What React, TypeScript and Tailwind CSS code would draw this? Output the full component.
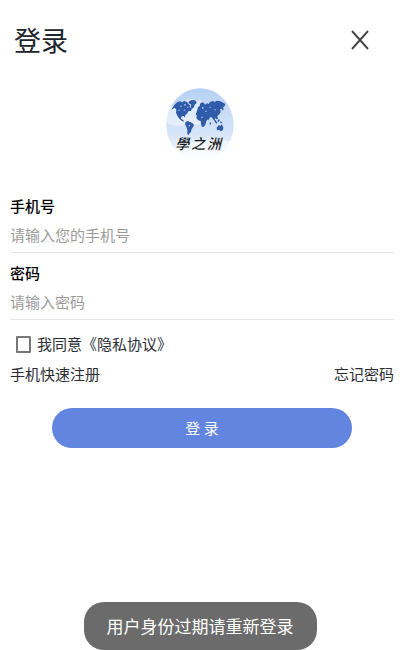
import { useState } from 'react'
import type { FormEvent } from 'react'

function Logo() {
  return (
    <svg className="h-[74px] w-[68px]" viewBox="33 26 204 222" role="img" aria-label="學之洲">
      <defs>
        <linearGradient id="sky" x1="0" y1="0" x2="0" y2="1">
          <stop offset="0" stopColor="#b4d1f3" />
          <stop offset="0.3" stopColor="#c6dbf6" />
          <stop offset="0.6" stopColor="#d5e4f9" />
          <stop offset="0.85" stopColor="#edf3fc" />
          <stop offset="1" stopColor="#ffffff" />
        </linearGradient>
        <clipPath id="disc">
          <ellipse cx="135" cy="137" rx="101" ry="110" />
        </clipPath>
      </defs>
      <g clipPath="url(#disc)">
        <rect x="33" y="26" width="204" height="222" fill="url(#sky)" />
        <path
          d="M33 92q12-14 26-10 8-14 26-12 18-18 40-6 22-4 28 12 14 2 18 16 10 20-10 32-20 14-50 12-46 10-78-6z"
          fill="#fff"
          opacity="0.45"
        />
        <path d="M60 200q30-22 60-10 40-16 70 0 24-10 47-4v62H50z" fill="#fff" opacity="0.5" />
        <g fill="#2f5ba9">
          <path d="M60 75l7-7 9-2 5 3 7-4 8 3 3 5 6 4-1 6 7 4-3 8-8 1-4 7-5 4-1 7-5-4-6 2-1 6 6 3 4 6-7-2-8-7-6-9-4-9 1-9-5-6-6 4-4 4 4-9z" />
          <path d="M101 67l7-4 9-1 6 3 2 6-6 5-2 8-6 4-4-6 1-7-8-3z" />
          <path d="M92 128l7-3 6 3 7 3 5 6-3 7-4 5-2 8-5 6-2 4-4-3v-13l-3-9-4-7z" />
          <path d="M127 91l2-8 5-3 1-7 6-4 6 1 3 6 6-4 5 2 4-6 9-3 5 3 6-4 9 1 8 4 9 5-2 7-5 2 2 6-3 5-3-6-5 2 2 8-4 7-6 5 2 8-5 2-3-4-3 9-5-7-4-5-5 2-2 9-5-9-5-3-6-4-6 2-6-5-6 3-6-2z" />
          <path d="M126 103l7-4 8 3 9 1 5 8 7 1-3 8-5 6-2 8-5 8-6 1-3-9-1-9-7-2-6-7z" />
          <path d="M164 130l3-3 1 7-3 4zM178 120l4 3 5 7-3 3-5-6zM188 121l5-1 1 6-5 2zM195 126l5 2 3 4-6-1z" />
          <path d="M185 145l6-7 6 1 3-4 5 9-1 8-6 4-5-4-7 1z" />
        </g>
        <g fill="#a9c5ec">
          <path d="M76 79h4v4h-4zM88 74h4v5h-4zM86 91h5v3h-5zM71 91h3v4h-3zM97 82h3v4h-3z" />
          <path d="M141 83h4v5h-4zM150 94h5v3h-5zM164 82h3v4h-3zM178 90h4v3h-4zM139 112h4v4h-4zM101 137h4v4h-4z" />
        </g>
      </g>
      <text
        x="61 109 156"
        y="209"
        fill="#171a20"
        className="font-['Noto_Sans_CJK_TC','Noto_Sans_CJK_SC',sans-serif] text-[42px] font-medium italic"
      >
        學之洲
      </text>
    </svg>
  )
}

interface FieldProps {
  id: string
  label: string
  type: string
  placeholder: string
}

function Field({ id, label, type, placeholder }: FieldProps) {
  return (
    <div className="border-b border-[#e6e6e6] pt-2 pb-0.5">
      <label htmlFor={id} className="block h-6 text-[15px] leading-6 font-medium text-black">
        {label}
      </label>
      <input
        id={id}
        type={type}
        placeholder={placeholder}
        className="block h-8 w-full bg-transparent text-[15px] text-[#333] outline-none placeholder:text-[#9b9b9b]"
      />
    </div>
  )
}

export default function App() {
  const [agreed, setAgreed] = useState(false)

  const handleSubmit = (e: FormEvent) => {
    e.preventDefault()
  }

  return (
    <main className="min-h-screen bg-white font-['Noto_Sans_CJK_SC',sans-serif] text-[#2b2d33]">
      <header className="flex h-20 items-center justify-between pr-[30px] pl-3.5">
        <h1 className="text-[27px] leading-9 text-[#20242b]">登录</h1>
        <button type="button" aria-label="关闭">
          <svg className="h-5 w-5" viewBox="0 0 20 20" fill="none" stroke="#444" strokeWidth="1.9">
            <path d="M2 1l16 18M18 1L2 19" />
          </svg>
        </button>
      </header>

      <div className="flex justify-center pt-2">
        <Logo />
      </div>

      <form onSubmit={handleSubmit} className="pt-6 pr-1.5 pl-2.5">
        <Field id="phone" label="手机号" type="tel" placeholder="请输入您的手机号" />
        <Field id="password" label="密码" type="password" placeholder="请输入密码" />

        <div className="mt-2 flex h-8 items-center gap-1.5 pl-1.5">
          <input
            id="agree"
            type="checkbox"
            checked={agreed}
            onChange={(e) => setAgreed(e.target.checked)}
            className="h-[17px] w-[15px] appearance-none rounded-[1px] border-2 border-[#77777b] checked:bg-[#6286df]"
          />
          <label htmlFor="agree" className="text-[15px] leading-6">
            我同意《隐私协议》
          </label>
        </div>

        <div className="flex h-7 items-center justify-between text-[15px] leading-6">
          <a href="#register">手机快速注册</a>
          <a href="#forgot">忘记密码</a>
        </div>

        <div className="px-[42px] pt-5">
          <button
            type="submit"
            className="block h-10 w-full rounded-full bg-[#6286df] text-[15px] text-white"
          >
            登 录
          </button>
        </div>
      </form>

      <div className="fixed inset-x-0 bottom-0 flex justify-center">
        <p
          role="status"
          className="rounded-[20px] bg-[#6b6b6b] px-[23px] py-3 text-[17px] leading-6 text-white"
        >
          用户身份过期请重新登录
        </p>
      </div>
    </main>
  )
}
